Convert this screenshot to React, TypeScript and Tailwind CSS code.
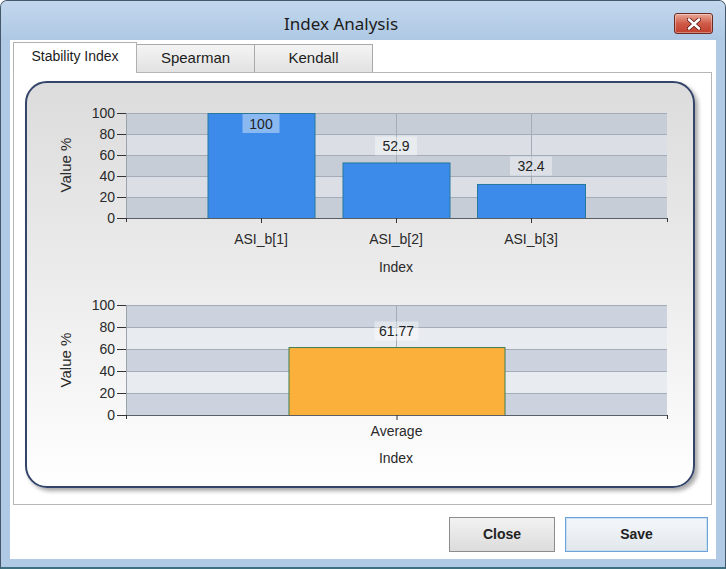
import React from "react";

type Bar = {
  center: number;
  width: number;
  value: number;
  name: string;
  labelY: number;
  labelW: number;
  fill: string;
  stroke: string;
};

type ChartProps = {
  top: number;
  height: number;
  y100: number;
  y0: number;
  bars: Bar[];
  gridX: number[];
  nameY: number;
  titleY: number;
  axisTitleY: number;
  dark: string;
  light: string;
};

const LEFT = 126;
const RIGHT = 667;

function Chart({ top, height, y100, y0, bars, gridX, nameY, titleY, axisTitleY, dark, light }: ChartProps) {
  const step = (y0 - y100) / 5;
  const yOf = (v: number) => y0 - (v / 100) * (y0 - y100);
  return (
    <svg
      width={666}
      height={height}
      viewBox={`27 ${top} 666 ${height}`}
      className="block font-['Liberation_Sans',Arial,sans-serif]"
    >
      {[0, 1, 2, 3, 4].map((i) => (
        <rect
          key={i}
          x={LEFT}
          y={y0 - (i + 1) * step}
          width={RIGHT - LEFT}
          height={step}
          fill={i % 2 === 0 ? dark : light}
        />
      ))}
      {[1, 2, 3, 4, 5].map((i) => (
        <line key={i} x1={LEFT} x2={RIGHT} y1={y0 - i * step + 0.5} y2={y0 - i * step + 0.5} stroke="#a4acb8" />
      ))}
      {gridX.map((x) => (
        <line key={x} x1={x + 0.5} x2={x + 0.5} y1={y100} y2={y0} stroke="#a4acb8" />
      ))}
      <line x1={LEFT + 0.5} x2={LEFT + 0.5} y1={y100} y2={y0} stroke="#9aa2ac" />

      {bars.map((b) => (
        <rect
          key={b.name}
          x={b.center - b.width / 2 + 0.5}
          y={yOf(b.value) + 0.5}
          width={b.width}
          height={y0 - yOf(b.value)}
          fill={b.fill}
          stroke={b.stroke}
        />
      ))}
      {bars.map((b) => (
        <g key={b.name + "l"}>
          <rect x={b.center - b.labelW / 2} y={b.labelY - 9.5} width={b.labelW} height={19} fill="#ffffff" opacity={0.4} />
          <text x={b.center} y={b.labelY + 5} textAnchor="middle" fontSize={14} fill="#222">
            {b.value}
          </text>
        </g>
      ))}

      <line x1={LEFT} x2={RIGHT + 0.5} y1={y0 + 0.5} y2={y0 + 0.5} stroke="#5a5f66" />
      <line x1={RIGHT + 0.5} x2={RIGHT + 0.5} y1={y0} y2={y0 + 4} stroke="#333" />
      <line x1={LEFT + 0.5} x2={LEFT + 0.5} y1={y0} y2={y0 + 4} stroke="#333" />
      {bars.map((b) => (
        <line key={b.name + "t"} x1={b.center + 0.5} x2={b.center + 0.5} y1={y0} y2={y0 + 5} stroke="#333" />
      ))}

      {[0, 20, 40, 60, 80, 100].map((v) => (
        <g key={v}>
          <line x1={117} x2={LEFT} y1={yOf(v) + 0.5} y2={yOf(v) + 0.5} stroke="#333" />
          <text x={115} y={yOf(v) + 5} textAnchor="end" fontSize={14} fill="#2a2a2a">
            {v}
          </text>
        </g>
      ))}

      <text
        x={65}
        y={axisTitleY}
        transform={`rotate(-90 65 ${axisTitleY})`}
        textAnchor="middle"
        dominantBaseline="central"
        fontSize={15}
        fill="#2a2a2a"
      >
        Value %
      </text>

      {bars.map((b) => (
        <text key={b.name + "n"} x={b.center} y={nameY} textAnchor="middle" fontSize={14} fill="#2a2a2a">
          {b.name}
        </text>
      ))}
      <text x={396} y={titleY} textAnchor="middle" fontSize={14} fill="#2a2a2a">
        Index
      </text>
    </svg>
  );
}

const BLUE = { fill: "#3c8aea", stroke: "#26789c" };
const ORANGE = { fill: "#fbb03c", stroke: "#3f7d52" };

export default function App() {
  return (
    <div className="w-[726px] h-[569px] flex flex-col bg-[#b0cae5] border border-[#44586a] border-b-2 border-b-[#3f7080] rounded-t-[7px] overflow-hidden font-['Liberation_Sans',Arial,sans-serif]">
      {/* title bar */}
      <div className="h-[39px] flex items-start bg-linear-to-b from-[#c2d7ed] to-[#aec8e4]">
        <div className="ml-[283px] mt-[11px] text-[17px] text-[#1c1c1c] font-['Noto_Sans',sans-serif] leading-[24px]">
          Index Analysis
        </div>
        <div className="flex-1" />
        <div className="mt-[12px] mr-[12px] w-[39px] h-[21px] rounded-[3px] border border-[#6b2a22] bg-linear-to-b from-[#e9a796] via-[#cf5a48] to-[#c0402c] flex items-center justify-center shadow-[inset_0_0_0_1px_rgba(255,255,255,0.35)]">
          <svg width="14" height="12" viewBox="0 0 14 12">
            <path d="M2 1.5 L12 10.5 M12 1.5 L2 10.5" stroke="#5a1a12" strokeWidth="4.2" strokeLinecap="round" />
            <path d="M2 1.5 L12 10.5 M12 1.5 L2 10.5" stroke="#ffffff" strokeWidth="2.6" strokeLinecap="round" />
          </svg>
        </div>
      </div>

      {/* client area */}
      <div className="flex-1 mx-[9px] mb-[8px] bg-white flex flex-col pl-[3px] pr-[4px] pt-[1px]">
        <div className="flex items-end h-[31px]">
          <div className="w-[124px] h-[31px] border border-b-0 border-[#b0b0b0] bg-white flex items-center justify-center text-[14px] text-[#1c1c1c] relative z-10 -mb-px pb-[4px]">
            Stability Index
          </div>
          <div className="w-[118px] h-[28px] border border-l-0 border-b-0 border-[#a9a9a9] bg-linear-to-b from-[#f4f4f4] to-[#e2e2e2] flex items-center justify-center text-[15px] text-[#1c1c1c]">
            Spearman
          </div>
          <div className="w-[118px] h-[28px] border border-l-0 border-b-0 border-[#a9a9a9] bg-linear-to-b from-[#f4f4f4] to-[#e2e2e2] flex items-center justify-center text-[15px] text-[#1c1c1c]">
            Kendall
          </div>
        </div>

        <div className="h-[433px] border border-[#b6b6b6] bg-white pl-[11px] pt-[8px]">
          <div className="w-[670px] h-[407px] rounded-[22px] border-2 border-[#33456a] bg-linear-to-b from-[#dcdcdc] via-[#ececec] to-white shadow-[3px_3px_4px_rgba(0,0,0,0.35)] flex flex-col overflow-hidden">
            <Chart
              top={83}
              height={201}
              y100={113}
              y0={218}
              gridX={[261, 396, 531]}
              nameY={244}
              titleY={272}
              axisTitleY={165}
              dark="#c6cdd7"
              light="#dbdfe5"
              bars={[
                { center: 261, width: 107, value: 100, name: "ASI_b[1]", labelY: 123.5, labelW: 37, ...BLUE },
                { center: 396, width: 107, value: 52.9, name: "ASI_b[2]", labelY: 146, labelW: 42, ...BLUE },
                { center: 531, width: 108, value: 32.4, name: "ASI_b[3]", labelY: 166, labelW: 42, ...BLUE },
              ]}
            />
            <Chart
              top={284}
              height={202}
              y100={305}
              y0={415}
              gridX={[396]}
              nameY={436}
              titleY={463}
              axisTitleY={360}
              dark="#ccd3de"
              light="#e8ebf0"
              bars={[{ center: 396.5, width: 216, value: 61.77, name: "Average", labelY: 331, labelW: 44, ...ORANGE }]}
            />
          </div>
        </div>

        <div className="flex justify-end gap-[10px] mt-[12px] pr-[4px]">
          <button className="w-[106px] h-[35px] border border-[#8c8c8c] bg-linear-to-b from-[#f2f2f2] to-[#dcdcdc] text-[14px] font-bold text-[#222]">
            Close
          </button>
          <button className="w-[143px] h-[35px] border border-[#6fa3d8] bg-linear-to-b from-[#f4f7fa] to-[#e2e7ec] shadow-[inset_0_0_0_1px_#c9dff3] text-[14px] font-bold text-[#222]">
            Save
          </button>
        </div>
      </div>
    </div>
  );
}
